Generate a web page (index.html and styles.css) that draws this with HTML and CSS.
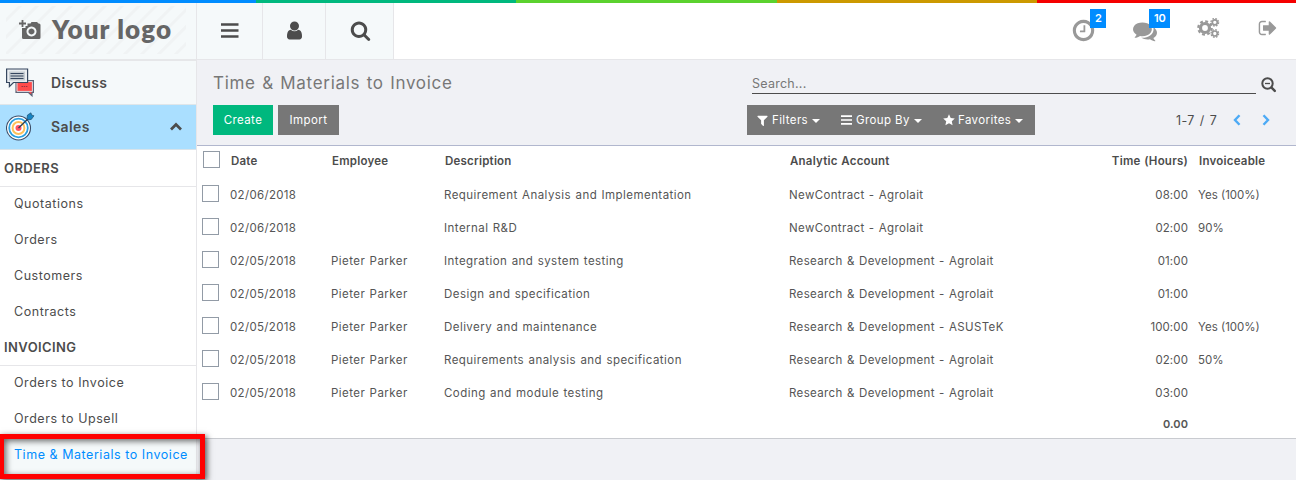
FILE: index.html
```html
<!DOCTYPE html>
<html lang="en">
<head>
<meta charset="utf-8">
<title>Time &amp; Materials to Invoice</title>
<link rel="stylesheet" href="styles.css">
</head>
<body>
<div class="stripe"><i class="blue"></i><i class="green"></i><i class="lime"></i><i class="gold"></i><i class="red"></i></div>
<div class="app">
  <aside class="sidebar">
    <div class="logo">
      <div class="logo-art">
        <svg width="24" height="22" viewBox="0 0 24 22"><path fill="#666" fill-rule="evenodd" d="M8.500 4.500h3l1-1.500h5.500l1.500 1.500H20q1.500 0 1.500 1.500v12.500Q21.500 20 20 20H4.500Q3 20 3 18.500V9h3.500V7h2zM12.500 7.500a5 5 0 1 0 .01 0zM12.500 9.500a3 3 0 1 1-.01 0z"/><path stroke="#666" stroke-width="1.800" d="M0 4.500h7M3.500 1v7"/></svg>
        <span>Your logo</span>
      </div>
    </div>
    <a class="app-link discuss">
      <svg width="29" height="29" viewBox="0 0 29 29"><path fill="#ff4b4b" stroke="#596579" stroke-width="1.200" d="M10 12.600h17.400v11.800H26v3.400l-3.800-3.400H10z"/><path fill="none" stroke="#d7dce2" d="M11 13.600h15.400v9.800H11z"/><path stroke="#9d3340" stroke-dasharray="1.500 .7" d="M15.500 18.500h6"/><path fill="#e9edf0" stroke="#36475f" stroke-width="1.200" d="M.6 1h21v13.500H7.500L3.400 18.500v-4H.6z"/><path fill="#c5ccd2" d="M3 3.500h16v9H3z"/><path stroke="#36475f" stroke-width="1.100" d="M4.500 5.500h13M4.500 8h13M4.500 10.500h13"/></svg>
      <span>Discuss</span>
    </a>
    <a class="app-link sales">
      <svg width="29" height="29" viewBox="0 0 29 29"><circle cx="12.500" cy="16" r="12" fill="#fff" stroke="#3b4c66" stroke-width="1.100"/><circle cx="12.500" cy="16" r="9.300" fill="#fff" stroke="#2b9fe0" stroke-width="1.800"/><circle cx="12.500" cy="16" r="5.900" fill="#fff" stroke="#ffc05a" stroke-width="2"/><circle cx="12.500" cy="16" r="3" fill="#ff5564"/><path stroke="#2b3d57" stroke-width="1.300" d="M12.500 16L25 4"/><path fill="#1784c4" stroke="#24506f" stroke-width=".7" d="M21 6.500l.5-3.500L25 .8l.5 2.200 2.500.8-2.700 3.600-3 .5z"/></svg>
      <span>Sales</span>
      <svg class="caret" width="12" height="9" viewBox="0 0 12 9"><path fill="none" stroke="#4c4c4c" stroke-width="2.700" d="M1 7.500l5-5 5 5"/></svg>
    </a>
    <h4 class="group">ORDERS</h4>
    <nav class="menu">
      <a>Quotations</a><a>Orders</a><a>Customers</a><a>Contracts</a>
    </nav>
    <h4 class="group">INVOICING</h4>
    <nav class="menu">
      <a>Orders to Invoice</a><a>Orders to Upsell</a><a class="active">Time &amp; Materials to Invoice</a>
    </nav>
  </aside>
  <main class="main">
    <header class="topbar">
      <div class="tool t1"><svg width="18" height="16" viewBox="0 0 18 16"><path stroke="#4c4c4c" stroke-width="2.600" d="M0 1.500h17.500M0 7.500h17.500M0 13.500h17.500"/></svg></div>
      <div class="tool t2"><svg width="21" height="21" viewBox="0 0 1792 1792"><path d="M1536 1399q0 109-62.500 187t-150.500 78h-854q-88 0-150.500-78t-62.500-187q0-85 8.500-160.500t31.500-152 58.500-131 94-89 134.500-34.500q131 128 313 128t313-128q76 0 134.500 34.500t94 89 58.500 131 31.500 152 8.500 160.500zm-256-887q0 159-112.500 271.500t-271.500 112.500-271.500-112.500-112.500-271.500 112.500-271.500 271.500-112.500 271.500 112.500 112.500 271.500z"/></svg></div>
      <div class="tool t3"><svg width="21" height="21" viewBox="0 0 1792 1792"><path d="M1216 832q0-185-131.500-316.500t-316.500-131.500-316.500 131.500-131.500 316.500 131.500 316.500 316.500 131.500 316.500-131.500 131.500-316.500zm512 832q0 52-38 90t-90 38q-54 0-90-38l-343-342q-179 124-399 124-143 0-273.500-55.500t-225-150-150-225-55.500-273.500 55.500-273.500 150-225 225-150 273.500-55.500 273.500 55.500 225 150 150 225 55.500 273.500q0 220-124 399l343 343q37 37 37 90z"/></svg></div>
      <div class="systray">
        <span class="tray clock"><svg width="25" height="25" viewBox="0 0 1792 1792"><path d="M1024 544v448q0 14-9 23t-23 9h-320q-14 0-23-9t-9-23v-64q0-14 9-23t23-9h224v-352q0-14 9-23t23-9h64q14 0 23 9t9 23zm416 352q0-148-73-273t-198-198-273-73-273 73-198 198-73 273 73 273 198 198 273 73 273-73 198-198 73-273zm224 0q0 209-103 385.500t-279.500 279.500-385.500 103-385.500-103-279.500-279.500-103-385.500 103-385.500 279.500-279.500 385.500-103 385.500 103 279.500 279.500 103 385.500z"/></svg><b class="badge">2</b></span>
        <span class="tray chat"><svg width="24" height="24" viewBox="0 0 1792 1792"><path d="M1408 768q0 139-94 257t-256.500 186.500-353.500 68.500q-86 0-176-16-124 88-278 128-36 9-86 16h-3q-11 0-20.500-8t-11.500-21q-1-3-1-6.500t.5-6.500 2-6l2.500-5 3.500-5.500 4-5 4.500-5 4-4.500q5-6 23-25t26-29.500 22.500-29 25-38.500 20.500-44q-124-72-195-177t-71-224q0-139 94-257t256.500-186.500 353.500-68.500 353.500 68.500 256.500 186.500 94 257zm384 256q0 120-71 224.500t-195 176.500q10 24 20.500 44t25 38.500 22.500 29 26 29.500 23 25q1 1 4 4.500t4.500 5 4 5 3.500 5.500l2.500 5 2 6 .5 6.500-1 6.500q-3 14-13 22t-22 7q-50-7-86-16-154-40-278-128-90 16-176 16-271 0-472-132 58 4 88 4 161 0 309-45t264-129q125-92 192-212t67-254q0-77-23-152 129 71 204 178t75 230z"/></svg><b class="badge">10</b></span>
        <span class="tray gears"><svg width="23" height="22" viewBox="0 0 23 22"><g fill="none" stroke="#999"><circle cx="8" cy="11" r="4.500" stroke-width="3.200"/><circle cx="8" cy="11" r="6.700" stroke-width="2.200" stroke-dasharray="2.900 2.362"/><circle cx="17.800" cy="5.300" r="2.500" stroke-width="1.700"/><circle cx="17.800" cy="5.300" r="3.800" stroke-width="1.300" stroke-dasharray="1.700 1.284"/><circle cx="17.800" cy="16.500" r="2.500" stroke-width="1.700"/><circle cx="17.800" cy="16.500" r="3.800" stroke-width="1.300" stroke-dasharray="1.700 1.284"/></g></svg></span>
        <span class="tray out"><svg width="20" height="20" viewBox="0 0 1792 1792"><path d="M704 1440q0 4 1 20t.5 26.500-3 23.500-10 19.500-20.500 6.500h-320q-119 0-203.500-84.500t-84.500-203.500v-704q0-119 84.500-203.500t203.500-84.500h320q13 0 22.500 9.500t9.500 22.500q0 4 1 20t.5 26.500-3 23.500-10 19.500-20.500 6.500h-320q-66 0-113 47t-47 113v704q0 66 47 113t113 47h312l11.500 1 11.500 3 8 5.500 7 9 2 13.500zm928-544q0 26-19 45l-544 544q-19 19-45 19t-45-19-19-45v-288h-448q-26 0-45-19t-19-45v-384q0-26 19-45t45-19h448v-288q0-26 19-45t45-19 45 19l544 544q19 19 19 45z"/></svg></span>
      </div>
    </header>
    <section class="panel">
      <div class="panel-left">
        <h1>Time &amp; Materials to Invoice</h1>
        <div class="buttons"><button class="btn create">Create</button><button class="btn import">Import</button></div>
      </div>
      <div class="panel-right">
        <div class="search">
          <div class="search-input">Search...</div>
          <svg width="16" height="16" viewBox="0 0 16 16"><circle cx="6.500" cy="6.500" r="5.200" fill="none" stroke="#4c4c4c" stroke-width="2"/><path stroke="#4c4c4c" stroke-width="1.300" d="M4 6.500h5"/><path stroke="#4c4c4c" stroke-width="2.500" stroke-linecap="round" d="M10.800 10.800l3 3"/></svg>
        </div>
        <div class="controls">
          <div class="dropdowns">
            <span class="dd dd1"><svg width="13" height="13" viewBox="0 0 1792 1792"><path d="M1595 295q17 41-14 70l-493 493v742q0 42-39 59-13 5-25 5-27 0-45-19l-256-256q-19-19-19-45v-486l-493-493q-31-29-14-70 17-39 59-39h1280q42 0 59 39z"/></svg><em>Filters</em><i></i></span>
            <span class="dd dd2"><svg width="11" height="10" viewBox="0 0 11 10"><path stroke="#fff" stroke-width="1.700" d="M0 1.200h11M0 5h11M0 8.800h11"/></svg><em>Group By</em><i></i></span>
            <span class="dd dd3"><svg width="12" height="12" viewBox="0 0 12 12"><path d="M6 .2l1.700 3.700 4.100.5-3 2.800.8 4.100L6 9.300l-3.600 2 .8-4.100-3-2.800 4.100-.5z"/></svg><em>Favorites</em><i></i></span>
          </div>
          <div class="pager"><span>1-7 / 7</span><svg width="8" height="12" viewBox="0 0 8 12"><path d="M6.500 1.200L2 6l4.500 4.800"/></svg><svg width="8" height="12" viewBox="0 0 8 12"><path d="M1.500 1.200L6 6l-4.500 4.800"/></svg></div>
        </div>
      </div>
    </section>
    <table class="list">
      <colgroup><col class="c-check"><col class="c-date"><col class="c-emp"><col class="c-desc"><col class="c-acc"><col class="c-time"><col></colgroup>
      <thead><tr><th><span class="box"></span></th><th>Date</th><th>Employee</th><th>Description</th><th>Analytic Account</th><th class="num">Time (Hours)</th><th>Invoiceable</th></tr></thead>
      <tbody>
        <tr><td><span class="box"></span></td><td class="date">02/06/2018</td><td></td><td>Requirement Analysis and Implementation</td><td class="acc">NewContract - Agrolait</td><td class="num">08:00</td><td class="inv">Yes (100%)</td></tr>
        <tr><td><span class="box"></span></td><td class="date">02/06/2018</td><td></td><td>Internal R&amp;D</td><td class="acc">NewContract - Agrolait</td><td class="num">02:00</td><td class="inv">90%</td></tr>
        <tr><td><span class="box"></span></td><td class="date">02/05/2018</td><td>Pieter Parker</td><td>Integration and system testing</td><td class="acc">Research &amp; Development - Agrolait</td><td class="num">01:00</td><td></td></tr>
        <tr><td><span class="box"></span></td><td class="date">02/05/2018</td><td>Pieter Parker</td><td>Design and specification</td><td class="acc">Research &amp; Development - Agrolait</td><td class="num">01:00</td><td></td></tr>
        <tr><td><span class="box"></span></td><td class="date">02/05/2018</td><td>Pieter Parker</td><td>Delivery and maintenance</td><td class="acc">Research &amp; Development - ASUSTeK</td><td class="num">100:00</td><td class="inv">Yes (100%)</td></tr>
        <tr><td><span class="box"></span></td><td class="date">02/05/2018</td><td>Pieter Parker</td><td>Requirements analysis and specification</td><td class="acc">Research &amp; Development - Agrolait</td><td class="num">02:00</td><td class="inv">50%</td></tr>
        <tr><td><span class="box"></span></td><td class="date">02/05/2018</td><td>Pieter Parker</td><td>Coding and module testing</td><td class="acc">Research &amp; Development - Agrolait</td><td class="num">03:00</td><td></td></tr>
      </tbody>
      <tfoot><tr><td></td><td></td><td></td><td></td><td></td><td class="num">0.00</td><td></td></tr></tfoot>
    </table>
  </main>
</div>
<div class="highlight"></div>
</body>
</html>
```
FILE: styles.css
```css
* { box-sizing: border-box; }
body { margin: 0; width: 1296px; height: 480px; overflow: hidden; position: relative; background: #f0f1f5; color: #4c4c4c; font-family: Inter, "Liberation Sans", sans-serif; font-size: 12px; }
svg { display: block; flex: none; }

.stripe { display: flex; height: 3px; }
.stripe i { flex: 0 0 260px; }
.stripe .blue { flex-basis: 256px; background: #008cff; }
.stripe .green { background: #00b87e; }
.stripe .lime { flex-basis: 261px; background: #5bd22e; }
.stripe .gold { background: #cc9900; }
.stripe .red { background: #f50000; }

.app { display: flex; height: 477px; }
.sidebar { width: 197px; flex: none; background: #fff; border-right: 1px solid #e6e6e9; }
.logo { height: 58px; padding: 3px 10px 0 6px; background: #f5f9fa; border-bottom: 2px solid #e6e7e9; }
.logo-art { height: 48px; display: flex; align-items: center; padding-left: 13px; gap: 9px; color: #666; font: 800 26px/46px Lato, sans-serif; letter-spacing: 1.1px; white-space: nowrap; background: repeating-linear-gradient(135deg, #f5f9fa 0 8px, #f0f3f4 9px 11px, #f5f9fa 12px); }
.logo-art span { height: 48px; }
.app-link { display: flex; align-items: center; height: 44px; padding: 0 14px 0 6px; font-size: 14px; font-weight: 600; letter-spacing: .4px; }
.app-link svg:first-child { margin-right: 16px; }
.discuss { background: #f5f9fa; border-bottom: 1px solid #e0e6e9; }
.sales { height: 45px; padding-bottom: 2px; background: #aadfff; border-bottom: 1px solid #d9e4ea; }
.caret { margin-left: auto; }
.group { margin: 0; height: 37px; padding-left: 4px; line-height: 37px; font-size: 13px; font-weight: 600; letter-spacing: .4px; border-bottom: 1px solid #e6e6e9; }
.menu { display: flex; flex-direction: column; }
.menu a { height: 36px; padding-left: 14px; line-height: 34px; font-size: 12.5px; letter-spacing: .54px; white-space: nowrap; }
.menu + .group { height: 35px; line-height: 33px; }
.menu .active { background: #f5f9fa; color: #008cff; }

.main { flex: 1; min-width: 0; }
.topbar { display: flex; height: 57px; background: #fff; border-bottom: 1px solid #e6e6e9; }
.tool { display: flex; align-items: center; justify-content: center; background: #f5f9fa; border-right: 1px solid #e6e6e9; fill: #4c4c4c; }
.t1 { width: 66px; }
.t2 { width: 63px; padding-bottom: 1px; }
.t3 { width: 68px; padding: 0 0 2px 1px; }
.systray { display: flex; margin-left: auto; padding-right: 18px; fill: #999; }
.tray { position: relative; }
.clock { margin: 15px 37px 0 0; }
.chat { margin: 16px 40px 0 0; }
.gears { margin: 14px 38px 0 0; }
.out { margin-top: 15px; }
.badge { position: absolute; left: 19px; top: -9px; height: 19px; padding: 0 5px; background: #008cff; color: #fff; font-size: 11px; font-weight: 600; line-height: 18px; }
.clock .badge { width: 16px; }
.chat .badge { left: 16px; top: -10px; width: 21px; letter-spacing: -.2px; }

.panel { display: flex; justify-content: space-between; height: 86px; padding: 0 20px 0 16px; border-bottom: 1px solid #b1b7ce; }
h1 { margin: 11px 0 9px; color: #777; font-size: 17px; line-height: 25px; font-weight: 400; letter-spacing: .7px; word-spacing: 1px; }
.buttons { display: flex; gap: 5px; }
.btn { height: 30px; padding: 0; border: 0; color: #fff; font: 11.500px/30px Inter, sans-serif; letter-spacing: .4px; }
.create { width: 60px; background: #00b87e; }
.import { width: 61px; background: #777; }
.panel-right { width: 529px; }
.search { display: flex; align-items: flex-end; gap: 5px; height: 34px; padding-left: 5px; }
.search svg { margin-bottom: 1px; }
.search-input { flex: none; width: 504px; height: 21px; color: #777; border-bottom: 1px solid #4c4c4c; line-height: 21px; font-size: 12.500px; letter-spacing: .25px; }
.controls { display: flex; align-items: center; justify-content: space-between; margin-top: 11px; }
.dropdowns { display: flex; width: 288px; height: 30px; background: #777; color: #fff; fill: #fff; }
.dd { display: flex; align-items: center; padding-left: 9px; }
.dd em { margin: 0 4px 0 3px; font-style: normal; font-size: 11.500px; letter-spacing: .4px; white-space: nowrap; }
.dd > i { border: 4px solid transparent; border-top-color: #fff; border-bottom: 0; margin-top: 2px; }
.dd1 { width: 84px; }
.dd2 { width: 102px; padding-left: 10px; }
.dd2 em { margin-left: 4px; }
.dd3 { padding-left: 10px; }
.pager { display: flex; align-items: center; gap: 20px; padding-right: 6px; font-size: 12.500px; letter-spacing: .3px; word-spacing: 1.300px; }
.pager span { margin-right: -4px; }
.pager svg { fill: none; stroke: #4daaf5; stroke-width: 2.400; }
.pager svg:last-child { margin-left: 1px; }

.list { width: 1099px; table-layout: fixed; border-collapse: separate; border-spacing: 0; background: #fff; border-bottom: 1px solid #c9cbd0; font-size: 11.500px; white-space: nowrap; }
.c-check { width: 33px; }
.c-date { width: 101px; }
.c-emp { width: 113px; }
.c-desc { width: 345px; }
.c-acc { width: 299px; }
.c-time { width: 100px; }
th, td { height: 33px; padding: 0; text-align: left; color: #555; letter-spacing: .45px; word-spacing: .7px; }
th { height: 32px; padding: 0 0 2px 1px; font-weight: 600; letter-spacing: .23px; word-spacing: .5px; color: #4c4c4c; }
.date { letter-spacing: .33px; }
.acc { letter-spacing: .36px; }
td.num { letter-spacing: .1px; }
.inv { letter-spacing: 0; word-spacing: 0; }
tfoot td { height: 29px; padding-top: 1px; font-weight: 600; }
tfoot td.num { font-size: 11px; letter-spacing: .1px; }
.list .num { text-align: right; }
th:last-child, td:last-child { padding-left: 10px; }
th:last-child { padding-left: 11px; }
.box { display: block; width: 17px; height: 17px; margin: -2px 0 0 5px; border: 1px solid #929ba6; background: #fff; }
th .box { margin-top: -3px; }

.highlight { position: absolute; left: -1px; top: 434px; width: 206px; height: 45px; border: 5px solid #f00; box-shadow: 2px 2px 6px rgba(0,0,0,.65), inset 2px 2px 6px rgba(0,0,0,.6); }
```
